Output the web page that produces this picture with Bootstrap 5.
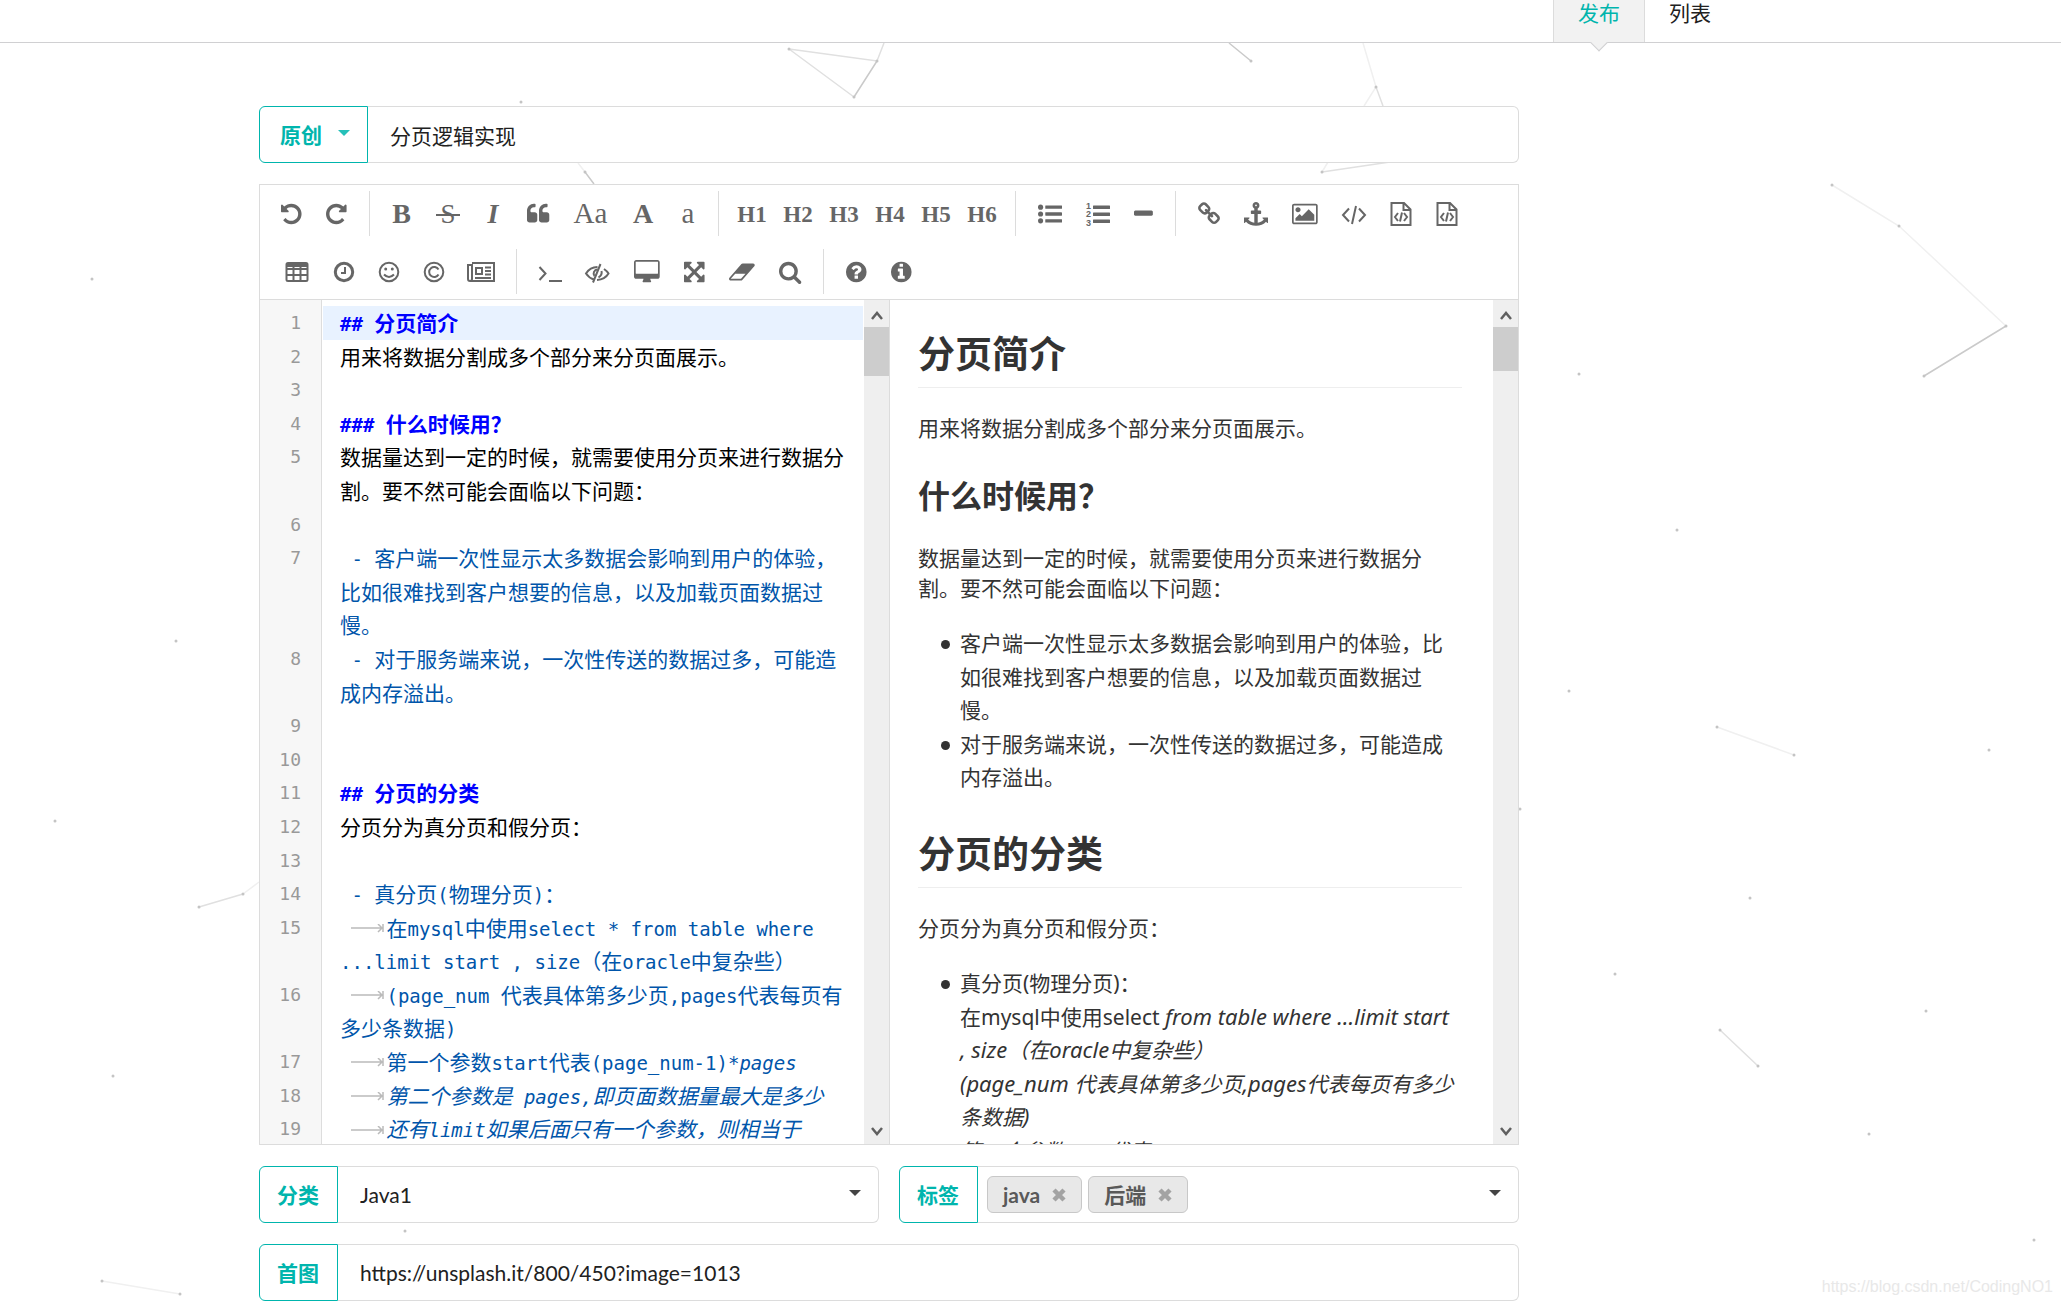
<!DOCTYPE html>
<html lang="zh-CN">
<head>
<meta charset="utf-8">
<meta name="viewport" content="width=device-width, initial-scale=1">
<title>发布</title>
<link href="https://cdn.jsdelivr.net/npm/bootstrap@5.3.0/dist/css/bootstrap.min.css" rel="stylesheet">
<style>
:root{--teal:#00b5ad;--line:#dcdcdc;--ui:Lato,"Noto Sans CJK SC",sans-serif;--prose:"Noto Sans","Noto Sans CJK SC",sans-serif}
body{font-family:var(--ui);font-size:21px;color:#212121;background:#fff;overflow-x:hidden}
.backdrop{position:absolute;left:0;top:0;z-index:-1}
.backdrop .soft{stroke:#f0f0f0}.backdrop .mid{stroke:#e0e0e0}.backdrop .hard{stroke:#cacaca}
.top-bar{height:43px;border-bottom:1px solid #d0d0d2;background:#fff;padding-right:326px}
.top-bar .nav-link{padding:0 24px 16px;line-height:26px;height:42px;color:#212121;position:relative}
.top-bar .nav-link.active{background:#f2f2f2;color:var(--teal);border:solid #dcdcdc;border-width:0 1px}
.top-bar .nav-link.active::after{content:"";position:absolute;left:50%;bottom:-7px;width:12px;height:12px;margin-left:-6px;background:#f2f2f2;border:solid #d0d0d2;border-width:0 1px 1px 0;transform:rotate(45deg)}
.page-main{max-width:1519px;padding:63px 0 4px 259px}
.stack{gap:21px}
.tag-btn{height:57px;border:1px solid var(--teal);color:var(--teal);background:#fff;font-weight:700;font-size:21px;border-radius:6px 0 0 6px;padding:0 18px 0 17px}
.tag-btn.kind{padding:0 17px 0 20px;gap:16px}
.field{height:57px;border:1px solid var(--line);border-left:0;border-radius:0 6px 6px 0;background:#fff;font-size:21px;color:#212121;padding:0 22px}
.field.form-select{background-image:none}
.caret{position:absolute;right:18px;top:24px;pointer-events:none}
.chips{padding:0 9px;gap:6px}
.chip{height:37px;border:1px solid #c8c8c8;border-radius:6px;background:#e8e8e8;color:#595959;font-weight:700;font-size:21px;padding:0 15px;gap:12px;line-height:35px}
.chip button{border:0;background:none;padding:0;line-height:0}
.editor{border:1px solid var(--line);background:#fff}
.tools{border-bottom:1px solid var(--line);padding:6px 0 5px 9px;gap:13px}
.tools .line2{padding-left:4px}
.tool{width:48px;height:45px;border:0;padding:0;background:none;color:#666;font-family:"Liberation Serif",serif;line-height:47px;display:flex;align-items:center;justify-content:center;flex:none}
.tool svg{height:24px;overflow:visible;fill:currentColor}
.tool svg.ln{fill:none;stroke:currentColor;stroke-width:2}
.t40{width:40px}.t43{width:43px}.t45{width:45px}.t46{width:46px}.t50{width:50px}.t55{width:55px}
.hd{font-weight:700;font-size:23px;padding-top:2px}.big{font-size:29px}.bb{font-size:28px;font-weight:700}
.sep{width:1px;height:45px;background:var(--line);margin:0 10px;flex:none}
.panes{height:844px}
.pane{min-width:0;overflow:hidden}
.source{background:linear-gradient(to right,#f7f7f7 61px,#ddd 61px,#ddd 62px,#fff 62px);padding-top:6px;line-height:1.6;color:#000}
.ln-no{width:61px;flex:none;text-align:right;padding-right:20px;color:#999;font:18px/33px "DejaVu Sans Mono",monospace}
.ln-tx{flex:1;min-width:0;margin:0 1px 0 2px;padding:0 13px 0 17px;white-space:pre-wrap;min-height:1.6em;font-family:"Noto Sans CJK SC",sans-serif}
.ln-tx s{text-decoration:none;font-family:"DejaVu Sans Mono",monospace;font-size:19px;line-height:1}
.ln-tx em{font-style:italic}
.cur{background:#e8f2ff}
.hh{color:#00f;font-weight:700}.ls{color:#05a}
.tab{display:inline-block;width:35px;height:12px}
.bar{width:25px;flex:none;background:#efefef;padding:10px 0 7px}
.thumb{width:100%;height:49px;background:#cdcdcd;margin-top:5px}
.thumb.short{height:44px}
.split{border-left:1px solid var(--line)}
.preview{padding:32px 31px 0 28px;color:#333;font-family:var(--prose)}
.preview h2{font-size:37px;line-height:44px;font-weight:700;padding-bottom:11px;border-bottom:1px solid #eee;margin:0 0 25px}
.preview h3{font-size:32px;line-height:38px;font-weight:700;margin:34px 0 28px}
.preview p{line-height:30px;margin:0 0 24px}
.preview ul{line-height:1.6;margin:0 0 37px;padding-left:42px;list-style:none}
.preview li{position:relative}
.preview li::before{content:"";position:absolute;left:-19px;top:13px;width:9px;height:9px;border-radius:50%;background:#333}
.lt{font-size:22px;line-height:1}
.water{position:absolute;right:8px;bottom:8px;font:16px/20px "Liberation Sans",sans-serif;color:#e8e8e8}
.page-wrap{position:relative;min-height:100vh}
</style>
</head>
<body>
<div class="page-wrap">
<svg class="backdrop" width="2061" height="1305" fill="none" stroke-width="1.5" aria-hidden="true">
<g class="soft"><path d="M1363 43L1376 87L1364 106M578 163L585 172M1322 172L1328 162M1832 185L1899 226L2006 326M1717 727L1794 755M243 894L259 882M102 1281L180 1294"/></g>
<g class="mid"><path d="M789 49L877 61L884 43M789 49L854 97M1376 87L1383 106M1322 172L1390 162M199 907L243 894M1720 1030L1758 1066"/></g>
<g class="hard"><path d="M877 61L854 97M1229 43L1251 61M585 172L594 184M2006 326L1924 376"/></g>
<path stroke="#c4c4c4" stroke-width="3" stroke-linecap="round" d="M789 49h0M877 61h0M854 97h0M1251 61h0M1376 87h0M521 102h0M585 172h0M1322 172h0M92 279h0M176 641h0M55 821h0M199 907h0M243 894h0M113 1076h0M102 1281h0M180 1294h0M1832 185h0M1899 226h0M2006 326h0M1924 376h0M1579 374h0M1677 530h0M1569 691h0M1989 750h0M1520 809h0M1750 898h0M1615 974h0M1926 1011h0M1869 1134h0M2034 1240h0M1717 727h0M1794 755h0M1720 1030h0M1758 1066h0M405 1231h0"/>
</svg>
<nav class="top-bar d-flex justify-content-end">
<a class="nav-link active" href="#">发布</a><a class="nav-link" href="#">列表</a>
</nav>
<main class="page-main">
<form class="stack d-flex flex-column">
<div class="d-flex">
<button type="button" class="tag-btn kind d-flex align-items-center">原创<svg width="12" height="12" viewBox="0 0 12 12" aria-hidden="true"><path fill="#00b5ad" opacity=".85" d="M0 1h12L6 7z"/></svg></button>
<input class="field flex-fill" type="text" value="分页逻辑实现" aria-label="标题">
</div>
<section class="editor">
<div class="tools d-flex flex-column">
<div class="d-flex">
<button type="button" class="tool t45" title="撤销"><svg viewBox="128 0 1536 1792"><path d="M1664 896q0 156-61 298t-164 245-245 164-298 61q-172 0-327-72.500t-264-204.500q-7-10-6.500-22.500t8.500-20.500l137-138q10-9 25-9 16 2 23 12 73 95 179 147t225 52q104 0 198.500-40.500t163.500-109.500 109.500-163.500 40.500-198.500-40.500-198.500-109.500-163.500-163.500-109.500-198.500-40.500q-98 0-188 35.500t-160 101.500l137 138q31 30 14 69-17 40-59 40h-448q-26 0-45-19t-19-45v-448q0-42 40-59 39-17 69 14l130 129q107-101 244.500-156.500t284.500-55.500q156 0 298 61t245 164 164 245 61 298z"/></svg></button>
<button type="button" class="tool t45" title="重做"><svg viewBox="128 0 1536 1792"><path d="M1664 256v448q0 26-19 45t-45 19h-448q-42 0-59-40-17-39 14-69l138-138q-148-137-349-137-104 0-198.500 40.500t-163.500 109.500-109.500 163.500-40.500 198.500 40.500 198.500 109.500 163.500 163.500 109.500 198.500 40.500q119 0 225-52t179-147q7-10 23-12 15 0 25 9l137 138q9 8 9.500 20.500t-7.500 22.500q-109 132-264 204.500t-327 72.500q-156 0-298-61t-245-164-164-245-61-298 61-298 164-245 245-164 298-61q147 0 284.500 55.500t244.500 156.500l130-129q29-31 70-14 39 17 39 59z"/></svg></button>
<span class="sep"></span>
<button type="button" class="tool t43 bb" title="粗体">B</button>
<button type="button" class="tool t50" title="删除线"><svg width="24" viewBox="0 0 24 24"><text x="12" y="21" text-anchor="middle" font-size="27">S</text><path d="M0 12h24v2H0z"/></svg></button>
<button type="button" class="tool t40 bb" title="斜体"><i>I</i></button>
<button type="button" class="tool t50" title="引用"><svg viewBox="64 0 1664 1792"><path d="M832 960v384q0 80-56 136t-136 56h-384q-80 0-136-56t-56-136v-704q0-104 40.500-198.500t109.500-163.500 163.500-109.500 198.500-40.500h64q26 0 45 19t19 45v128q0 26-19 45t-45 19h-64q-106 0-181 75t-75 181v32q0 40 28 68t68 28h224q80 0 136 56t56 136zm896 0v384q0 80-56 136t-136 56h-384q-80 0-136-56t-56-136v-704q0-104 40.500-198.500t109.500-163.500 163.500-109.500 198.500-40.500h64q26 0 45 19t19 45v128q0 26-19 45t-45 19h-64q-106 0-181 75t-75 181v32q0 40 28 68t68 28h224q80 0 136 56t56 136z"/></svg></button>
<button type="button" class="tool t55 big" title="首字母大写">Aa</button>
<button type="button" class="tool t50 bb" title="大写">A</button>
<button type="button" class="tool t40 big" title="小写">a</button>
<span class="sep"></span>
<button type="button" class="tool t46 hd">H1</button><button type="button" class="tool t46 hd">H2</button><button type="button" class="tool t46 hd">H3</button><button type="button" class="tool t46 hd">H4</button><button type="button" class="tool t46 hd">H5</button><button type="button" class="tool t46 hd">H6</button>
<span class="sep"></span>
<button type="button" class="tool" title="无序列表"><svg viewBox="0 0 1792 1792"><circle cx="192" cy="384" r="192"/><circle cx="192" cy="896" r="192"/><circle cx="192" cy="1408" r="192"/><rect x="544" y="256" width="1248" height="256" rx="32"/><rect x="544" y="768" width="1248" height="256" rx="32"/><rect x="544" y="1280" width="1248" height="256" rx="32"/></svg></button>
<button type="button" class="tool" title="有序列表"><svg width="24" viewBox="0 0 24 24"><rect x="7" y="3.500" width="17" height="3.500" rx=".5"/><rect x="7" y="10.500" width="17" height="3.500" rx=".5"/><rect x="7" y="17.500" width="17" height="3.500" rx=".5"/><g font-family="Liberation Sans" font-weight="700" font-size="9"><text x="0" y="7">1</text><text x="0" y="15">2</text><text x="0" y="24">3</text></g></svg></button>
<button type="button" class="tool t43" title="横线"><svg viewBox="192 0 1408 1792"><path d="M1600 736v192q0 40-28 68t-68 28h-1216q-40 0-68-28t-28-68v-192q0-40 28-68t68-28h1216q40 0 68 28t28 68z"/></svg></button>
<span class="sep"></span>
<button type="button" class="tool t46" title="链接"><svg viewBox="0 0 1792 1792"><path d="M1520 1216q0-40-28-68l-208-208q-28-28-68-28-42 0-72 32 3 3 19 18.500t21.500 21.500 15 19 13 25.500 3.500 27.500q0 40-28 68t-68 28q-15 0-27.500-3.500t-25.500-13-19-15-21.500-21.500-18.500-19q-33 31-33 73 0 40 28 68l206 207q27 27 68 27 40 0 68-26l147-146q28-28 28-67zm-703-705q0-40-28-68l-206-207q-28-28-68-28-39 0-68 27l-147 146q-28 28-28 67 0 40 28 68l208 208q27 27 68 27 42 0 72-31-3-3-19-18.500t-21.500-21.500-15-19-13-25.500-3.500-27.500q0-40 28-68t68-28q15 0 27.500 3.500t25.500 13 19 15 21.500 21.500 18.500 19q33-31 33-73zm895 705q0 120-85 203l-147 146q-83 83-203 83-121 0-204-85l-206-207q-83-83-83-203 0-123 88-209l-88-88q-86 88-208 88-120 0-204-84l-208-208q-84-84-84-204t85-203l147-146q83-83 203-83 121 0 204 85l206 207q83 83 83 203 0 123-88 209l88 88q86-88 208-88 120 0 204 84l208 208q84 84 84 204z"/></svg></button>
<button type="button" class="tool" title="锚点"><svg viewBox="0 0 1792 1792"><path d="M960 256q0-26-19-45t-45-19-45 19-19 45 19 45 45 19 45-19 19-45zm832 928v352q0 22-20 30-8 2-12 2-13 0-23-9l-93-93q-119 143-318.500 226.500t-429.500 83.500-429.500-83.500-318.500-226.500l-93 93q-9 9-23 9-4 0-12-2-20-8-20-30v-352q0-14 9-23t23-9h352q22 0 30 20 8 19-7 35l-100 100q67 91 189.500 153.500t271.500 82.500v-647h-192q-26 0-45-19t-19-45v-128q0-26 19-45t45-19h192v-163q-58-34-93-92.500t-35-128.500q0-106 75-181t181-75 181 75 75 181q0 70-35 128.500t-93 92.500v163h192q26 0 45 19t19 45v128q0 26-19 45t-45 19h-192v647q149-20 271.500-82.500t189.500-153.500l-100-100q-15-16-7-35 8-20 30-20h352q14 0 23 9t9 23z"/></svg></button>
<button type="button" class="tool t50" title="图片"><svg viewBox="-64 0 1920 1792"><path d="M576 576q0 80-56 136t-136 56-136-56-56-136 56-136 136-56 136 56 56 136zm1024 384v448h-1408v-192l320-320 160 160 512-512zm96-704h-1600q-13 0-22.500 9.500t-9.500 22.500v1216q0 13 9.500 22.500t22.500 9.500h1600q13 0 22.500-9.500t9.500-22.500v-1216q0-13-9.500-22.500t-22.500-9.500zm160 32v1216q0 66-47 113t-113 47h-1600q-66 0-113-47t-47-113v-1216q0-66 47-113t113-47h1600q66 0 113 47t47 113z"/></svg></button>
<button type="button" class="tool" title="行内代码"><svg class="ln" width="26" viewBox="0 0 26 24"><path d="M8 6.500L2 13l6 6.500M18 6.500l6 6.500-6 6.500M15 4l-4 18"/></svg></button>
<button type="button" class="tool t46" title="预格式文本"><svg class="ln" width="22" viewBox="0 0 22 24"><path d="M1.500 1h12.500l6.500 6.500V23h-19zM13.500 1v7h7M8 11l-3 4 3 4M14 11l3 4-3 4M12 10.500l-2 9"/></svg></button>
<button type="button" class="tool t46" title="代码块"><svg class="ln" width="22" viewBox="0 0 22 24"><path d="M1.500 1h12.500l6.500 6.500V23h-19zM13.500 1v7h7M8 11l-3 4 3 4M14 11l3 4-3 4M12 10.500l-2 9"/></svg></button>
</div>
<div class="line2 d-flex">
<button type="button" class="tool" title="表格"><svg class="ln" width="24" viewBox="0 0 24 24"><rect x="1.500" y="3" width="21" height="18" rx="1.500"/><path d="M2 9h20M2 15h20M8.500 4v17M15.500 4v17"/><path stroke-width="4" d="M2 5h20"/></svg></button>
<button type="button" class="tool t45" title="时间"><svg class="ln" width="22" viewBox="0 0 22 24"><circle cx="11" cy="12" r="8.700" stroke-width="3"/><path d="M12 7v6H8"/></svg></button>
<button type="button" class="tool t45" title="表情"><svg class="ln" width="22" viewBox="0 0 22 24"><circle cx="11" cy="12" r="9.300"/><path d="M6 14.500q5 5 10 0"/><path stroke-width="3" stroke-linecap="round" d="M7.700 9h0M14.300 9h0"/></svg></button>
<button type="button" class="tool t45" title="符号"><svg class="ln" width="22" viewBox="0 0 22 24"><circle cx="11" cy="12" r="9.300"/><path d="M15.500 9.500a5 5 0 1 0 0 5"/></svg></button>
<button type="button" class="tool t50" title="分页符"><svg class="ln" width="28" viewBox="0 0 28 24"><path d="M5 3h22v18H3q-2 0-2-2V5h4v14q0 2-2 2"/><path d="M9 8h6v6H9zM18 7.500h6M18 11h6M18 14.500h6M8 18h16"/></svg></button>
<span class="sep"></span>
<button type="button" class="tool t45" title="跳转行"><svg class="ln" width="24" viewBox="0 0 24 24"><path d="M1.500 7l6 6.500-6 6.500M11 21h13"/></svg></button>
<button type="button" class="tool t50" title="关闭预览"><svg class="ln" width="26" viewBox="0 0 26 24"><path d="M10 19.500Q5 18 2 13.500 6 7 13.500 7M20 9q3 2 4.500 4.500Q21 19.500 13 20M16.500 4L9 22.500"/><path d="M13.500 9.500a4 4 0 0 0-3 6.500M17.500 11q1 4-3 6.500"/></svg></button>
<button type="button" class="tool t50" title="全窗口预览"><svg viewBox="-64 0 1920 1792"><path d="M1728 992v-832q0-13-9.500-22.500t-22.500-9.500h-1600q-13 0-22.500 9.500t-9.500 22.500v832q0 13 9.500 22.500t22.500 9.500h1600q13 0 22.500-9.500t9.500-22.500zm128-832v1088q0 66-47 113t-113 47h-544q0 37 16 77.500t32 71 16 43.500q0 26-19 45t-45 19h-512q-26 0-45-19t-19-45q0-14 16-44t32-70 16-78h-544q-66 0-113-47t-47-113v-1088q0-66 47-113t113-47h1600q66 0 113 47t47 113z"/></svg></button>
<button type="button" class="tool t45" title="全屏"><svg viewBox="128 0 1536 1792"><path d="M1411 541l-355 355 355 355 144-144q29-31 70-14 39 17 39 59v448q0 26-19 45t-45 19h-448q-42 0-59-40-17-39 14-69l144-144-355-355-355 355 144 144q31 30 14 69-17 40-59 40h-448q-26 0-45-19t-19-45v-448q0-42 40-59 39-17 69 14l144 144 355-355-355-355-144 144q-19 19-45 19-12 0-24-5-40-17-40-59v-448q0-26 19-45t45-19h448q42 0 59 40 17 39-14 69l-144 144 355 355 355-355-144-144q-31-30-14-69 17-40 59-40h448q26 0 45 19t19 45v448q0 42-39 59-13 5-25 5-26 0-45-19z"/></svg></button>
<button type="button" class="tool t50" title="清空"><svg viewBox="-64 0 1920 1792"><path d="M832 1408l336-384h-768l-336 384h768zm1013-1077q15 34 9.500 71.500t-30.500 65.500l-896 1024q-38 44-96 44h-768q-38 0-69.500-20.500t-47.500-54.500q-15-34-9.500-71.500t30.500-65.500l896-1024q38-44 96-44h768q38 0 69.500 20.500t47.500 54.500z"/></svg></button>
<button type="button" class="tool t46" title="搜索"><svg viewBox="64 0 1664 1792"><path d="M1216 832q0-185-131.500-316.500t-316.500-131.500-316.500 131.500-131.500 316.500 131.500 316.500 316.500 131.500 316.500-131.500 131.500-316.500zm512 832q0 52-38 90t-90 38q-54 0-90-38l-343-342q-179 124-399 124-143 0-273.500-55.500t-225-150-150-225-55.500-273.500 55.500-273.500 150-225 225-150 273.500-55.500 273.500 55.500 225 150 150 225 55.500 273.500q0 220-124 399l343 343q37 37 37 90z"/></svg></button>
<span class="sep"></span>
<button type="button" class="tool t45" title="使用帮助"><svg viewBox="128 0 1536 1792"><path d="M1024 1376v-192q0-14-9-23t-23-9h-192q-14 0-23 9t-9 23v192q0 14 9 23t23 9h192q14 0 23-9t9-23zm256-672q0-88-55.500-163t-138.500-116-170-41q-243 0-371 213-15 24 8 42l132 100q7 6 19 6 16 0 25-12 53-68 86-92 34-24 86-24 48 0 85.500 26t37.500 59q0 38-20 61t-68 45q-63 28-115.500 86.500t-52.500 125.500v36q0 14 9 23t23 9h192q14 0 23-9t9-23q0-19 21.500-49.500t54.500-49.500q32-18 49-28.500t46-35 44.500-48 28-60.500 12.500-81zm384 192q0 209-103 385.500t-279.500 279.500-385.500 103-385.500-103-279.500-279.500-103-385.500 103-385.500 279.500-279.500 385.500-103 385.500 103 279.500 279.500 103 385.500z"/></svg></button>
<button type="button" class="tool t45" title="关于"><svg viewBox="128 0 1536 1792"><path d="M1152 1376v-160q0-14-9-23t-23-9h-96v-512q0-14-9-23t-23-9h-320q-14 0-23 9t-9 23v160q0 14 9 23t23 9h96v320h-96q-14 0-23 9t-9 23v160q0 14 9 23t23 9h448q14 0 23-9t9-23zm-128-896v-160q0-14-9-23t-23-9h-192q-14 0-23 9t-9 23v160q0 14 9 23t23 9h192q14 0 23-9t9-23zm640 416q0 209-103 385.500t-279.500 279.500-385.500 103-385.500-103-279.500-279.500-103-385.500 103-385.500 279.500-279.500 385.500-103 385.500 103 279.500 279.500 103 385.500z"/></svg></button>
</div>
</div>
<div class="panes d-flex">
<div class="pane d-flex w-50">
<div class="pane source flex-fill">
<div class="d-flex"><div class="ln-no">1</div><div class="ln-tx cur hh"><s>## </s>分页简介</div></div>
<div class="d-flex"><div class="ln-no">2</div><div class="ln-tx">用来将数据分割成多个部分来分页面展示。</div></div>
<div class="d-flex"><div class="ln-no">3</div><div class="ln-tx"></div></div>
<div class="d-flex"><div class="ln-no">4</div><div class="ln-tx hh"><s>### </s>什么时候用？</div></div>
<div class="d-flex"><div class="ln-no">5</div><div class="ln-tx">数据量达到一定的时候，就需要使用分页来进行数据分割。要不然可能会面临以下问题：</div></div>
<div class="d-flex"><div class="ln-no">6</div><div class="ln-tx"></div></div>
<div class="d-flex"><div class="ln-no">7</div><div class="ln-tx ls"><s> - </s>客户端一次性显示太多数据会影响到用户的体验，比如很难找到客户想要的信息，以及加载页面数据过慢。</div></div>
<div class="d-flex"><div class="ln-no">8</div><div class="ln-tx ls"><s> - </s>对于服务端来说，一次性传送的数据过多，可能造成内存溢出。</div></div>
<div class="d-flex"><div class="ln-no">9</div><div class="ln-tx"></div></div>
<div class="d-flex"><div class="ln-no">10</div><div class="ln-tx"></div></div>
<div class="d-flex"><div class="ln-no">11</div><div class="ln-tx hh"><s>## </s>分页的分类</div></div>
<div class="d-flex"><div class="ln-no">12</div><div class="ln-tx">分页分为真分页和假分页：</div></div>
<div class="d-flex"><div class="ln-no">13</div><div class="ln-tx"></div></div>
<div class="d-flex"><div class="ln-no">14</div><div class="ln-tx ls"><s> - </s>真分页<s>(</s>物理分页<s>)</s>：</div></div>
<div class="d-flex"><div class="ln-no">15</div><div class="ln-tx ls"><s> </s><svg class="tab" viewBox="0 0 35 12"><path fill="none" stroke="#bbb" stroke-width="1.500" d="M0 4h31M27 0l4 4-4 4M32 0v8"/></svg>在<s>mysql</s>中使用<s>select * from table where ...limit start , size</s>（在<s>oracle</s>中复杂些）</div></div>
<div class="d-flex"><div class="ln-no">16</div><div class="ln-tx ls"><s> </s><svg class="tab" viewBox="0 0 35 12"><path fill="none" stroke="#bbb" stroke-width="1.500" d="M0 4h31M27 0l4 4-4 4M32 0v8"/></svg><s>(page_num </s>代表具体第多少页<s>,pages</s>代表每页有多少条数据<s>)</s></div></div>
<div class="d-flex"><div class="ln-no">17</div><div class="ln-tx ls"><s> </s><svg class="tab" viewBox="0 0 35 12"><path fill="none" stroke="#bbb" stroke-width="1.500" d="M0 4h31M27 0l4 4-4 4M32 0v8"/></svg>第一个参数<s>start</s>代表<s>(page_num-1)*<em>pages</em></s></div></div>
<div class="d-flex"><div class="ln-no">18</div><div class="ln-tx ls"><s> </s><svg class="tab" viewBox="0 0 35 12"><path fill="none" stroke="#bbb" stroke-width="1.500" d="M0 4h31M27 0l4 4-4 4M32 0v8"/></svg><em>第二个参数是<s> pages,</s>即页面数据量最大是多少</em></div></div>
<div class="d-flex"><div class="ln-no">19</div><div class="ln-tx ls"><s> </s><svg class="tab" viewBox="0 0 35 12"><path fill="none" stroke="#bbb" stroke-width="1.500" d="M0 4h31M27 0l4 4-4 4M32 0v8"/></svg><em>还有<s>limit</s>如果后面只有一个参数，则相当于</em></div></div>
</div>
<div class="bar d-flex flex-column align-items-center" aria-hidden="true">
<svg width="12" height="12" viewBox="0 0 12 12" fill="none" stroke="#606060" stroke-width="2.500"><path d="M1 9l5-6 5 6"/></svg><div class="thumb"></div>
<svg class="mt-auto" width="12" height="12" viewBox="0 0 12 12" fill="none" stroke="#606060" stroke-width="2.500"><path d="M1 3l5 6 5-6"/></svg>
</div>
</div>
<div class="pane split d-flex w-50">
<article class="pane preview flex-fill">
<h2>分页简介</h2>
<p>用来将数据分割成多个部分来分页面展示。</p>
<h3>什么时候用？</h3>
<p>数据量达到一定的时候，就需要使用分页来进行数据分割。要不然可能会面临以下问题：</p>
<ul><li>客户端一次性显示太多数据会影响到用户的体验，比如很难找到客户想要的信息，以及加载页面数据过慢。</li><li>对于服务端来说，一次性传送的数据过多，可能造成内存溢出。</li></ul>
<h2>分页的分类</h2>
<p>分页分为真分页和假分页：</p>
<ul><li>真分页(物理分页)：<br>在mysql中使用select <em><span class="lt">from table where …limit start <span class="text-nowrap">, size</span></span>（在<span class="lt">oracle</span>中复杂些）<br><span class="lt">(page_num </span>代表具体第多少页<span class="lt">,pages</span>代表每页有多少条数据<span class="lt">)</span><br>第一个参数start代表</em></li></ul>
</article>
<div class="bar d-flex flex-column align-items-center" aria-hidden="true">
<svg width="12" height="12" viewBox="0 0 12 12" fill="none" stroke="#606060" stroke-width="2.500"><path d="M1 9l5-6 5 6"/></svg><div class="thumb short"></div>
<svg class="mt-auto" width="12" height="12" viewBox="0 0 12 12" fill="none" stroke="#606060" stroke-width="2.500"><path d="M1 3l5 6 5-6"/></svg>
</div>
</div>
</div>
</section>
<div class="d-flex" style="gap:20px">
<div class="d-flex flex-fill w-50 position-relative">
<label class="tag-btn d-flex align-items-center flex-shrink-0" for="type">分类</label>
<select class="field form-select" id="type"><option>Java1</option></select>
<svg class="caret" width="12" height="6" viewBox="0 0 12 6" aria-hidden="true"><path fill="#444" d="M0 0h12L6 6z"/></svg>
</div>
<div class="d-flex flex-fill w-50 position-relative">
<label class="tag-btn d-flex align-items-center flex-shrink-0" for="addtag">标签</label>
<div class="field chips d-flex flex-fill align-items-center">
<span class="chip d-flex align-items-center">java<button type="button" aria-label="删除 java"><svg width="14" height="14" viewBox="0 0 14 14"><path stroke="#a3a3a3" stroke-width="4.500" d="M2 2l10 10M12 2L2 12"/></svg></button></span>
<span class="chip d-flex align-items-center">后端<button type="button" aria-label="删除 后端"><svg width="14" height="14" viewBox="0 0 14 14"><path stroke="#a3a3a3" stroke-width="4.500" d="M2 2l10 10M12 2L2 12"/></svg></button></span>
<input id="addtag" type="text" class="border-0 bg-transparent p-0 flex-fill" style="min-width:0;outline:0">
</div>
<svg class="caret" width="12" height="6" viewBox="0 0 12 6" aria-hidden="true"><path fill="#444" d="M0 0h12L6 6z"/></svg>
</div>
</div>
<div class="d-flex">
<label class="tag-btn d-flex align-items-center" for="cover">首图</label>
<input class="field flex-fill" id="cover" type="text" value="https://unsplash.it/800/450?image=1013">
</div>
</form>
</main>
<div class="water">https://blog.csdn.net/CodingNO1</div>
</div>
<script src="https://cdn.jsdelivr.net/npm/bootstrap@5.3.0/dist/js/bootstrap.bundle.min.js"></script>
</body>
</html>
